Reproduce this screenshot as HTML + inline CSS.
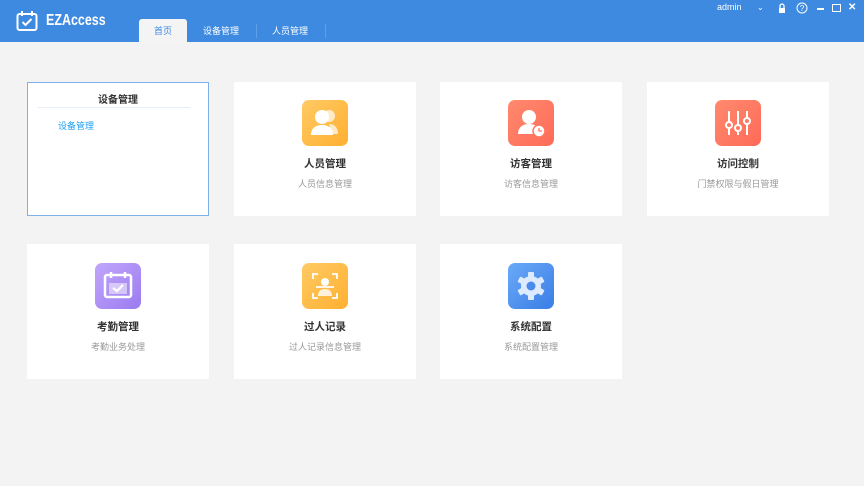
<!DOCTYPE html>
<html><head><meta charset="utf-8"><style>
*{margin:0;padding:0;box-sizing:border-box}
body{width:864px;height:486px;background:#f3f3f3;font-family:"Liberation Sans","Noto Sans CJK SC",sans-serif;position:relative;overflow:hidden}
.hd{position:absolute;left:0;top:0;width:864px;height:42px;background:#3d8ae0;color:#fff}
.logo{position:absolute;left:46px;top:12px;font-size:16px;font-weight:bold;transform:scaleX(.78);transform-origin:left}
.tab{position:absolute;top:19px;height:23px;font-size:9px;line-height:24px;text-align:center;color:#fff}
.sep{position:absolute;top:24px;width:1px;height:14px;background:#5e9fe6}
.card{position:absolute;width:182px;height:134px;background:#fff;text-align:center}
.ic{position:absolute;left:68px;top:18px;width:46px;height:46px;border-radius:7px}
.t{position:absolute;left:0;right:0;top:74px;font-size:10.5px;font-weight:bold;color:#333}
.s{position:absolute;left:0;right:0;top:95px;font-size:9px;color:#999}
.tr{position:absolute;top:2px;font-size:9px;color:#fff}
</style></head><body>
<div class="hd">
<svg style="position:absolute;left:16px;top:10px" width="22" height="22" viewBox="0 0 22 22"><rect x="1.5" y="4" width="19" height="16" rx="2" fill="none" stroke="#fff" stroke-width="2"/><rect x="5" y="1" width="2" height="5" fill="#fff"/><rect x="15" y="1" width="2" height="5" fill="#fff"/><path d="M6.5 12l3 3 6-6" fill="none" stroke="#fff" stroke-width="2"/></svg>
<div class="logo">EZAccess</div>
<div class="tab" style="left:139px;width:48px;background:#f4f4f4;color:#3d8ae0;border-radius:3px 3px 0 0">首页</div>
<div class="tab" style="left:195px;width:52px">设备管理</div>
<div class="sep" style="left:256px"></div>
<div class="tab" style="left:264px;width:52px">人员管理</div>
<div class="sep" style="left:325px"></div>
<div class="tr" style="left:717px">admin</div>
<div class="tr" style="left:757px;font-size:8px;top:3px">&#8964;</div>
<svg style="position:absolute;left:778px;top:3px" width="8" height="10" viewBox="0 0 8 10"><path d="M2 5V3a2 2 0 014 0v2" fill="none" stroke="#fff" stroke-width="1.3"/><rect x="1" y="5" width="6" height="5" fill="#fff"/></svg>
<svg style="position:absolute;left:796px;top:2px" width="12" height="12" viewBox="0 0 12 12"><circle cx="6" cy="6" r="5" fill="none" stroke="#fff"/><text x="6" y="9" font-size="8" fill="#fff" text-anchor="middle" font-family="Liberation Sans">?</text></svg>
<div style="position:absolute;left:817px;top:8px;width:7px;height:1.5px;background:#fff"></div>
<div style="position:absolute;left:832px;top:4px;width:9px;height:8px;border:1.5px solid #fff"></div>
<div class="tr" style="left:848px;font-weight:bold;font-size:10px;top:2px">✕</div>
</div>

<div class="card" style="left:27px;top:82px;border:1px solid #7fb0ea">
<div style="position:absolute;left:0;right:0;top:8px;font-size:10px;font-weight:bold;color:#333">设备管理</div>
<div style="position:absolute;left:10px;right:18px;top:24px;height:1px;background:#e6eef8"></div>
<div style="position:absolute;left:30px;top:36px;font-size:9px;color:#1ea0f0">设备管理</div>
</div>

<div class="card" style="left:234px;top:82px"><div class="ic" style="background:linear-gradient(135deg,#ffca64,#ffb030)"><svg width="46" height="46" viewBox="0 0 46 46"><circle cx="27" cy="16" r="6" fill="#fff" opacity=".7"/><path d="M27 24c6 0 9 4 9 10h-6" fill="#fff" opacity=".7"/><circle cx="20" cy="17" r="7" fill="#fff"/><path d="M9 35c0-7 5-10 11-10s11 3 11 10z" fill="#fff"/></svg></div><div class="t">人员管理</div><div class="s">人员信息管理</div></div>

<div class="card" style="left:440px;top:82px"><div class="ic" style="background:linear-gradient(135deg,#ff8a6e,#ff6a58)"><svg width="46" height="46" viewBox="0 0 46 46"><circle cx="21" cy="17" r="7" fill="#fff"/><path d="M10 34c0-7 5-10 11-10s11 3 11 10z" fill="#fff"/><circle cx="31" cy="31" r="6" fill="#fff" stroke="#ff7760" stroke-width="1.5"/><path d="M31 28v3h3" stroke="#ff7760" stroke-width="1.3" fill="none"/></svg></div><div class="t">访客管理</div><div class="s">访客信息管理</div></div>

<div class="card" style="left:647px;top:82px"><div class="ic" style="background:linear-gradient(135deg,#ff8a6e,#ff6a58)"><svg width="46" height="46" viewBox="0 0 46 46" stroke="#fff" stroke-width="2"><path d="M14 11v24M23 11v24M32 11v24"/><circle cx="14" cy="25" r="3" fill="#ff7a62"/><circle cx="23" cy="28" r="3" fill="#ff7a62"/><circle cx="32" cy="21" r="3" fill="#ff7a62"/></svg></div><div class="t">访问控制</div><div class="s">门禁权限与假日管理</div></div>

<div class="card" style="left:27px;top:244px;height:135px"><div class="ic" style="top:19px;background:linear-gradient(135deg,#c1a6fb,#9b7bf0)"><svg width="46" height="46" viewBox="0 0 46 46"><rect x="10" y="12" width="26" height="22" rx="2" fill="none" stroke="#fff" stroke-width="2.5"/><path d="M16 9v6M30 9v6" stroke="#fff" stroke-width="2.5"/><rect x="14" y="20" width="18" height="11" fill="#fff" opacity=".5"/><path d="M18 25l4 3 6-6" stroke="#fff" stroke-width="2.2" fill="none"/></svg></div><div class="t" style="top:75px">考勤管理</div><div class="s" style="top:96px">考勤业务处理</div></div>

<div class="card" style="left:234px;top:244px;height:135px"><div class="ic" style="top:19px;background:linear-gradient(135deg,#ffca64,#ffb030)"><svg width="46" height="46" viewBox="0 0 46 46" stroke="#fff" stroke-width="1.8" fill="none"><path d="M11 16v-5h5M30 11h5v5M35 30v5h-5M16 35h-5v-5"/><circle cx="23" cy="19" r="4" fill="#fff" stroke="none"/><path d="M14 24h18"/><path d="M16 33c0-5 3-7 7-7s7 2 7 7z" fill="#fff" stroke="none" opacity=".8"/></svg></div><div class="t" style="top:75px">过人记录</div><div class="s" style="top:96px">过人记录信息管理</div></div>

<div class="card" style="left:440px;top:244px;height:135px"><div class="ic" style="top:19px;background:linear-gradient(135deg,#6aaaf8,#3a7de6)"><svg width="46" height="46" viewBox="0 0 46 46"><g fill="#deebff"><circle cx="23" cy="23" r="10"/><rect x="20" y="9" width="6" height="28" rx="1"/><rect x="20" y="9" width="6" height="28" rx="1" transform="rotate(60 23 23)"/><rect x="20" y="9" width="6" height="28" rx="1" transform="rotate(120 23 23)"/></g><circle cx="23" cy="23" r="4.5" fill="#4a8cec"/></svg></div><div class="t" style="top:75px">系统配置</div><div class="s" style="top:96px">系统配置管理</div></div>
</body></html>
